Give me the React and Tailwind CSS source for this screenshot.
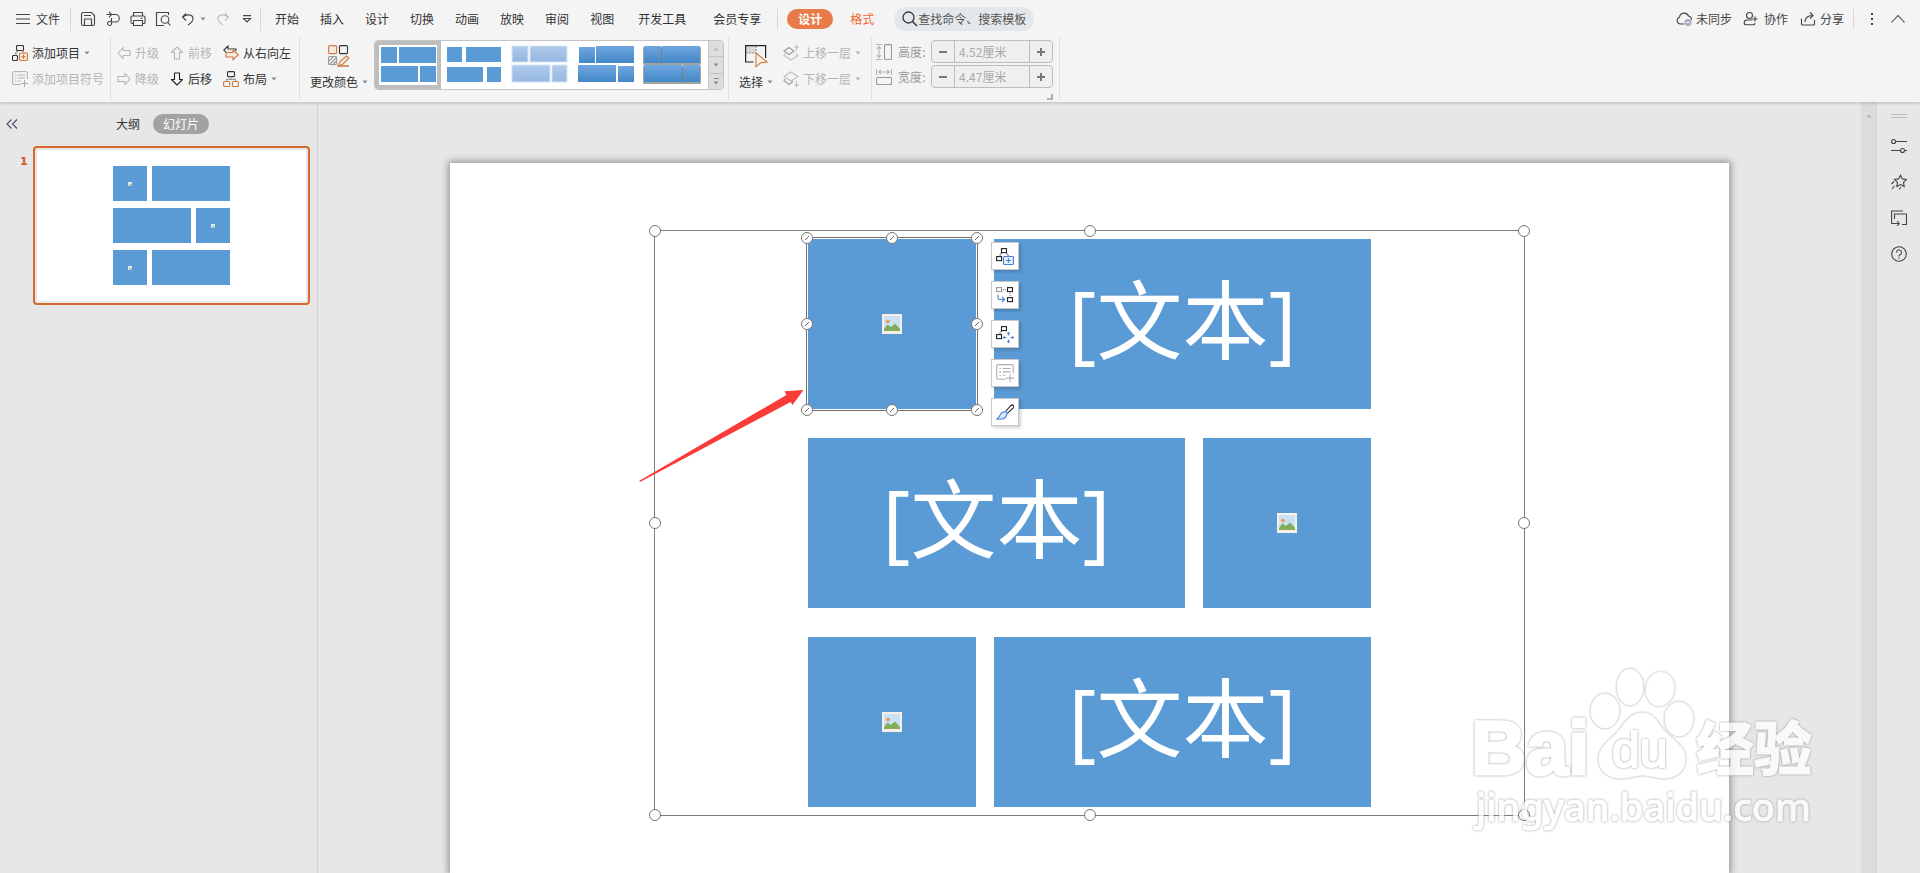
import { useState } from 'react'

const TABS = ['开始', '插入', '设计', '切换', '动画', '放映', '审阅', '视图']
const WIDE_TABS = ['开发工具', '会员专享']

function Icon({ w = 16, h = 16, className = 'text-[#444]', children }) {
  return (
    <svg
      width={w}
      height={h}
      viewBox={`0 0 ${w} ${h}`}
      fill="none"
      stroke="currentColor"
      strokeWidth="1.1"
      className={`shrink-0 ${className}`}
      aria-hidden="true"
    >
      {children}
    </svg>
  )
}

function Caret({ className = 'text-[#888]' }) {
  return (
    <svg width="6" height="4" viewBox="0 0 6 4" className={`shrink-0 ${className}`} aria-hidden="true">
      <path d="M.5.500h5L3 3.400z" fill="currentColor" />
    </svg>
  )
}

function AddItemIcon({ accent = '#cf7a45', fill = '#f8e7dc' }) {
  return (
    <Icon className="text-[#333]">
      <rect x="4.5" y="0.5" width="7" height="5" rx="1" />
      <rect x="0.5" y="10.5" width="5" height="5" rx="1" />
      <path d="M5.5 5.5 3 10" strokeDasharray="1.5 1" />
      <path d="M10.5 5.5 12 8" stroke={accent} />
      <rect x="7.5" y="8" width="8" height="7.5" rx="1.5" fill={fill} stroke={accent} />
      <path d="M11.5 9.5v4.5M9.2 11.8h4.6" stroke={accent} />
    </Icon>
  )
}

function QuickAddIcon() {
  return (
    <Icon w={18} h={17} className="text-[#222]">
      <rect x="5.500" y=".6" width="5" height="4" />
      <rect x=".6" y="8.600" width="5" height="4" />
      <path d="M5.500 5 3.500 8" strokeDasharray="1 1" />
      <path d="M10.500 5 13 8.500" stroke="#4a80dc" />
      <rect x="7.500" y="8.500" width="10" height="8" rx="1" fill="#e3edfb" stroke="#4a80dc" />
      <path d="M12.500 10.200v4.600M10.200 12.500h4.600" stroke="#4a80dc" />
    </Icon>
  )
}

function AddBulletIcon({ w = 16 }) {
  return (
    <svg width={w} height={w} viewBox="0 0 16 16" fill="none" stroke="#b0b0b0" className="shrink-0" aria-hidden="true">
      <path d="M8.500 13.500H2a1.400 1.400 0 0 1-1.400-1.400V2A1.400 1.400 0 0 1 2 .6h12A1.400 1.400 0 0 1 15.400 2v6" />
      <path d="M3 4h1.500M6 4h7M3 7h1.500M6 7h7M3 10h1.500M6 10h2.500M12.500 9v7M9 12.500h7" />
    </svg>
  )
}

function ArrowIcon({ dir, className }) {
  const paths = {
    left: 'M1 7l5-5.500v3h7v5H6v3z',
    right: 'M13 7L8 1.500v3H1v5h7v3z',
    up: 'M7 1L1.500 6.500h3V13h5V6.500h3z',
    down: 'M7 13L1.500 7.500h3V1h5v6.500h3z',
  }
  return (
    <Icon w={14} h={14} className={className}>
      <path d={paths[dir]} strokeLinejoin="round" />
    </Icon>
  )
}

function LayerIcon({ up }) {
  return (
    <Icon className="text-[#c0c0c0]">
      {up ? (
        <>
          <path d="M6 2.500 11 6 6 9.500 1 6z" stroke="#999" />
          <path d="M2.500 9 1 10.500 8 15l7-4.500L12 9" />
          <path d="M13.500 6V1M11.500 3l2-2.200 2 2.200" />
        </>
      ) : (
        <>
          <path d="M8 1l7 4.500L8 10 1 5.500z" />
          <path d="M2 8 1 9.500l5 4 4-3.200" stroke="#999" />
          <path d="M13.500 9.500v6M11.500 13.500l2 2 2-2" />
        </>
      )}
    </Icon>
  )
}

function RibbonButton({ icon, label, muted, caret }) {
  return (
    <button
      type="button"
      disabled={muted}
      className={`flex h-[26px] items-center gap-1 whitespace-nowrap ${muted ? 'text-[#b4b4b4]' : 'text-[#333]'}`}
    >
      {icon}
      <span>{label}</span>
      {caret && <Caret className={muted ? 'text-[#b4b4b4]' : 'text-[#888]'} />}
    </button>
  )
}

function StepField({ id, label, icon, value }) {
  const [size, setSize] = useState(value)
  return (
    <div className="flex items-center">
      {icon}
      <label htmlFor={id} className="ml-1.5 w-[33px] text-[#999]">
        {label}:
      </label>
      <div className="flex h-[23px] w-[122px] overflow-hidden rounded border border-[#bdbdbd] bg-[#efefef]">
        <button type="button" aria-label={`减小${label}`} className="flex w-[23px] items-center justify-center border-r border-[#bdbdbd]">
          <span className="h-[2px] w-2 bg-[#777]" />
        </button>
        <input
          id={id}
          value={size}
          onChange={(e) => setSize(e.target.value)}
          className="w-0 flex-1 bg-transparent px-1 text-[#aaa] outline-none"
        />
        <button type="button" aria-label={`增大${label}`} className="flex w-[23px] items-center justify-center border-l border-[#bdbdbd]">
          <svg width="8" height="8" viewBox="0 0 8 8" aria-hidden="true">
            <path d="M3 0h2v3h3v2H5v3H3V5H0V3h3z" fill="#777" />
          </svg>
        </button>
      </div>
    </div>
  )
}

// x, y, width, height of the four blocks in each style preview
const STYLES = [
  { name: '样式 1', fill: '#5b9bd5', blocks: [[3, 2, 16, 16], [21, 2, 37, 16], [3, 21, 37, 16], [42, 21, 16, 16]] },
  { name: '样式 2', fill: '#5b9bd5', blocks: [[3, 2, 15, 15], [22, 2, 35, 15], [3, 22, 36, 15], [43, 22, 14, 15]] },
  { name: '样式 3', fill: 'url(#lightBlue)', stroke: '#d6e4f5', blocks: [[2, 1, 16, 16], [20, 1, 37, 16], [2, 20, 38, 17], [42, 20, 15, 17]] },
  { name: '样式 4', fill: 'url(#deepBlue)', blocks: [[3, 2, 16, 16], [20, 1, 38, 17], [2, 20, 38, 17], [42, 21, 16, 16]] },
  { name: '样式 5', fill: 'url(#deepBlue)', shadow: true, blocks: [[2, 1, 17, 17], [20, 1, 38, 17], [2, 20, 38, 17], [41, 20, 17, 17]] },
]

function StyleGallery() {
  const [active, setActive] = useState(0)
  return (
    <div className="flex h-[50px] w-[350px] overflow-hidden rounded border border-[#c4c4c4] bg-white">
      <svg width="0" height="0" className="absolute" aria-hidden="true">
        <defs>
          <linearGradient id="lightBlue" x2="0" y2="1">
            <stop offset="0" stopColor="#b0cae9" />
            <stop offset="1" stopColor="#94b6e1" />
          </linearGradient>
          <linearGradient id="deepBlue" x2="0" y2="1">
            <stop offset="0" stopColor="#70a6de" />
            <stop offset="1" stopColor="#4288c8" />
          </linearGradient>
        </defs>
      </svg>
      <div className="flex flex-1">
        {STYLES.map((s, i) => (
          <button
            key={s.name}
            type="button"
            aria-label={s.name}
            onClick={() => setActive(i)}
            className={`flex w-[66px] shrink-0 items-center justify-center ${
              i === active ? 'shadow-[inset_0_0_0_4px_#bebebe]' : ''
            }`}
          >
            <svg width="60" height="40" viewBox="0 0 60 40" aria-hidden="true">
              {s.blocks.map(([x, y, w, h]) => (
                <g key={`${x}-${y}`}>
                  {s.shadow && <rect x={x - 1} y={y + 1} width={w + 2} height={h + 1} rx="1" fill="#666" opacity=".6" />}
                  <rect x={x} y={y} width={w} height={h} fill={s.fill} stroke={s.stroke} />
                </g>
              ))}
            </svg>
          </button>
        ))}
      </div>
      <div className="flex w-[15px] flex-col divide-y divide-[#c4c4c4] border-l border-[#c4c4c4] bg-[#dedede]">
        <button type="button" aria-label="上一行" className="flex flex-1 items-center justify-center">
          <Caret className="rotate-180 text-[#bbb]" />
        </button>
        <button type="button" aria-label="下一行" className="flex flex-1 items-center justify-center">
          <Caret />
        </button>
        <button type="button" aria-label="更多样式" className="flex flex-1 flex-col items-center justify-center gap-[2px]">
          <span className="h-px w-[5px] bg-[#888]" />
          <Caret />
        </button>
      </div>
    </div>
  )
}

function TopBar() {
  return (
    <div className="flex h-[38px] items-center whitespace-nowrap">
      <button type="button" className="flex items-center gap-[6px] pl-4">
        <Icon w={14} h={10}>
          <path d="M0 .5h14M0 5h14M0 9.500h14" />
        </Icon>
        文件
      </button>
      <div className="ml-[10px] h-6 w-px bg-[#d8d8d8]" />

      <div className="flex items-center gap-[9px] pl-[9px]">
        <button type="button" aria-label="保存">
          <Icon>
            <path d="M1.500 13V3a1.500 1.500 0 0 1 1.500-1.500h8.500l3 3V13a1.500 1.500 0 0 1-1.500 1.500H3A1.500 1.500 0 0 1 1.500 13z" />
            <path d="M4.500 14V8h7v6M4 4.500h7" />
          </Icon>
        </button>
        <button type="button" aria-label="输出">
          <Icon>
            <path d="M1.500 3.500h9a3.500 3.500 0 0 1 0 7.500h-4M4 .8l2.600 2.700L4 6.300" />
            <path d="M6.500 7v5.500a2 2 0 1 1-3-1.800c.8-.5 2-.7 3-.7" />
          </Icon>
        </button>
        <button type="button" aria-label="打印">
          <Icon>
            <path d="M3.500 5V1.500h9V5M3.500 12.500H2A1 1 0 0 1 1 11.500V6.200A1.200 1.200 0 0 1 2.200 5h11.600A1.200 1.200 0 0 1 15 6.200v5.300a1 1 0 0 1-1 1h-1.500" />
            <path d="M3.500 9.500h9v5h-9zM10.500 7.200h2" />
          </Icon>
        </button>
        <button type="button" aria-label="打印预览">
          <Icon>
            <path d="M13.500 4V1.500h-12v13H9" />
            <circle cx="10" cy="8.500" r="3.800" />
            <path d="m12.700 11.300 2.800 3.200" />
          </Icon>
        </button>
        <button type="button" aria-label="撤销" className="flex items-center gap-1">
          <Icon>
            <path d="M6 2.500 2.500 6 6 9.500M2.800 6c3.500-3 10-3.200 10.200 1.500.1 2.500-2 4.700-5 6.500" />
          </Icon>
          <Caret />
        </button>
        <button type="button" aria-label="恢复" disabled>
          <Icon className="text-[#bbb]">
            <path d="m10 2.500 3.500 3.500L10 9.500M13.200 6C9.700 3 3.200 2.800 3 7.500c-.1 2.500 2 4.700 5 6.500" />
          </Icon>
        </button>
        <button type="button" aria-label="自定义快速访问工具栏" className="pl-[2px]">
          <Icon w={10} h={8}>
            <path d="M1 .6h8M1.500 3.500h7L5 7z" />
          </Icon>
        </button>
      </div>
      <div className="ml-2 h-6 w-px bg-[#d8d8d8]" />

      <nav className="flex items-center gap-[21px] pl-[14px] text-[#333]">
        {TABS.map((tab) => (
          <button key={tab} type="button">
            {tab}
          </button>
        ))}
        {WIDE_TABS.map((tab) => (
          <button key={tab} type="button" className="px-[3px]">
            {tab}
          </button>
        ))}
      </nav>
      <div className="ml-[13px] h-5 w-px bg-[#d8d8d8]" />
      <button type="button" className="ml-[9px] h-5 rounded-full bg-[#e87b49] px-[11px] font-bold text-white">
        设计
      </button>
      <button type="button" className="ml-[17px] text-[#f0682f]">
        格式
      </button>
      <label className="ml-5 flex h-6 w-[140px] items-center rounded-full bg-[#e5e8eb] pl-2">
        <Icon className="text-[#333]">
          <circle cx="6.500" cy="6.500" r="5.500" strokeWidth="1.300" />
          <path d="m10.500 10.500 4.500 4.500" strokeWidth="1.500" />
        </Icon>
        <input
          aria-label="查找命令"
          placeholder="查找命令、搜索模板"
          className="w-0 flex-1 bg-transparent outline-none placeholder:text-[#555]"
        />
      </label>

      <div className="ml-auto flex items-center">
        <button type="button" className="flex items-center gap-1">
          <Icon>
            <path d="M8 13H4.500A3.500 3.500 0 0 1 3.500 6.200 4.700 4.700 0 0 1 12.500 5 3.800 3.800 0 0 1 15.500 9" />
            <circle cx="12" cy="11.500" r="3.500" fill="#a3adbd" stroke="none" />
            <path d="M10.200 11.500h3.600" stroke="#fff" />
          </Icon>
          未同步
        </button>
        <button type="button" className="ml-[11px] flex items-center gap-[5px]">
          <Icon>
            <circle cx="6.500" cy="4.500" r="3" />
            <path d="M9.500 9H4a2.800 2.800 0 0 0-2.800 2.800c0 1.400.8 2 2 2h6.600c1.200 0 2.200-.4 2.200-1.800M12 5.500v5M9.500 8h5" />
          </Icon>
          协作
        </button>
        <button type="button" className="ml-3 flex items-center gap-1">
          <Icon>
            <path d="M1.500 7.500V13a1 1 0 0 0 1 1h11a1 1 0 0 0 1-1V9" />
            <path d="M5 11c0-4 2.500-6.500 7.500-6.500M10 1.500l3 3-3 3" />
          </Icon>
          分享
        </button>
        <div className="ml-[9px] h-5 w-px bg-[#d8d8d8]" />
        <button type="button" aria-label="更多" className="ml-4">
          <Icon w={4} h={12}>
            <path d="M1 0h2v2H1zM1 5h2v2H1zM1 10h2v2H1z" fill="currentColor" stroke="none" />
          </Icon>
        </button>
        <button type="button" aria-label="折叠功能区" className="ml-4 mr-[14px]">
          <Icon w={16} h={10}>
            <path d="m1.500 8.500 6.500-7 6.500 7" />
          </Icon>
        </button>
      </div>
    </div>
  )
}

function Ribbon() {
  return (
    <div className="flex h-[62px] whitespace-nowrap">
      <div className="border-r border-[#dedede] pl-3 pr-1.5 pt-[2px]">
        <RibbonButton icon={<AddItemIcon />} label="添加项目" caret />
        <RibbonButton icon={<AddBulletIcon />} label="添加项目符号" muted />
      </div>

      <div className="flex gap-[11px] border-r border-[#dedede] pl-[6px] pr-2 pt-[2px]">
        <div>
          <RibbonButton icon={<ArrowIcon dir="left" className="text-[#b4b4b4]" />} label="升级" muted />
          <RibbonButton icon={<ArrowIcon dir="right" className="text-[#b4b4b4]" />} label="降级" muted />
        </div>
        <div>
          <RibbonButton icon={<ArrowIcon dir="up" className="text-[#b4b4b4]" />} label="前移" muted />
          <RibbonButton icon={<ArrowIcon dir="down" className="text-[#222]" />} label="后移" />
        </div>
        <div>
          <RibbonButton
            icon={
              <Icon className="text-[#333]">
                <path d="M13 6V4H5V1L.8 5 4 8.300" />
                <path d="M3 7.500h7V4.800l5.300 5-5.300 5V12H3z" fill="#f8e7dc" stroke="#cf7a45" />
              </Icon>
            }
            label="从右向左"
          />
          <RibbonButton
            icon={
              <Icon className="text-[#333]">
                <rect x="4.500" y=".6" width="7" height="5" rx="1" />
                <path d="M8 5.600v2.800M3.500 10.500V8.400h9v2.100" stroke="#999" />
                <rect x=".6" y="10.500" width="6" height="5" rx="1" stroke="#cf7a45" />
                <rect x="9.400" y="10.500" width="6" height="5" rx="1" stroke="#cf7a45" />
              </Icon>
            }
            label="布局"
            caret
          />
        </div>
      </div>

      <div className="flex gap-[6px] border-r border-[#dedede] pl-[10px] pr-1 pt-[2px]">
        <button type="button" className="flex h-[50px] flex-col items-center justify-between pt-[5px] text-[#333]">
          <Icon w={22} h={22} className="text-[#333]">
            <rect x=".6" y=".6" width="8" height="8" rx="1" fill="#f8e7dc" stroke="#cf7a45" />
            <rect x="11.500" y=".6" width="8" height="8" rx="1" />
            <rect x=".6" y="11.500" width="8" height="8" rx="1" stroke="#999" />
            <path d="M1 16l4.500-4.500M2 19l6.500-6.500M5 19.500l3.500-3.500" stroke="#999" />
            <path d="M10 21l2-4.500 6.500-5.500 2.500 2-6 6zh11" fill="#f8e7dc" stroke="#cf7a45" />
            <path d="M10 21h11" stroke="#cf7a45" />
          </Icon>
          <span className="flex items-center gap-1 leading-4">
            更改颜色
            <Caret />
          </span>
        </button>
        <StyleGallery />
      </div>

      <div className="flex gap-[10px] border-r border-[#dedede] pl-[10px] pr-[10px] pt-[2px]">
        <button type="button" className="flex h-[50px] flex-col items-center justify-between pt-1 text-[#333]">
          <Icon w={24} h={24} className="text-[#222]">
            <path d="M1 1h10v8H1z" fill="#d9d9d9" stroke="none" />
            <path d="M9.500 18H1.600V1.600h20V14" strokeWidth="1.200" />
            <path d="M12 2v7H2" stroke="#888" strokeDasharray="2 1" />
            <path d="m12 9 11 9-6.500.8-4.500 4z" fill="#fbeee6" stroke="#cf7a45" />
          </Icon>
          <span className="flex items-center gap-1 leading-4">
            选择
            <Caret />
          </span>
        </button>
        <div>
          <RibbonButton icon={<LayerIcon up />} label="上移一层" muted caret />
          <RibbonButton icon={<LayerIcon />} label="下移一层" muted caret />
        </div>
      </div>

      <div className="flex flex-col gap-[2px] border-r border-[#dedede] pl-1 pr-[6px] pt-[2px]">
        <StepField
          id="shape-height"
          label="高度"
          value="4.52厘米"
          icon={
            <Icon className="text-[#b4b4b4]">
              <path d="M0 .5h6M0 15.500h6M3 3v10M1 5l2-2.500L5 5M1 11l2 2.500L5 11" />
              <rect x="8.500" y=".6" width="7" height="15" rx="1" stroke="#999" />
            </Icon>
          }
        />
        <StepField
          id="shape-width"
          label="宽度"
          value="4.47厘米"
          icon={
            <Icon className="text-[#b4b4b4]">
              <path d="M.5 0v6M15.500 0v6M3 3h10M5 1 2.500 3 5 5M11 1l2.500 2L11 5" />
              <rect x=".6" y="8.500" width="15" height="7" rx="1" stroke="#999" />
            </Icon>
          }
        />
        <button type="button" aria-label="大小设置" className="mt-1 self-end">
          <Icon w={6} h={6} className="text-[#777]">
            <path d="M5 0v5H0" />
          </Icon>
        </button>
      </div>
    </div>
  )
}

function PicturePlaceholder() {
  return (
    <svg width="20" height="20" viewBox="0 0 20 20" aria-hidden="true">
      <path d="M0 0h20v20H0z" fill="#fbeee6" />
      <path d="M2 2h16v15H2z" fill="#c9e1f5" />
      <circle cx="6" cy="7.500" r="1.800" fill="#f0964a" />
      <path d="M2 17v-2l3.500-4.500 3.500 2.500 4-3.500 5 5.500v2z" fill="#84ad5a" />
    </svg>
  )
}

function ThumbPicture() {
  return (
    <svg width="4" height="4" viewBox="0 0 4 4" aria-hidden="true">
      <path d="M0 0h4v4H0z" fill="#dce9f2" />
      <path d="M1 2.500h3v1H1z" fill="#84ad5a" />
    </svg>
  )
}

function ThumbRow({ reverse }) {
  return (
    <div className={`flex h-[35px] gap-[5px] ${reverse ? 'flex-row-reverse' : ''}`}>
      <div className="flex w-[34px] items-center justify-center bg-[#5b9bd5]">
        <ThumbPicture />
      </div>
      <div className="flex-1 bg-[#5b9bd5]" />
    </div>
  )
}

function SlidePanel() {
  return (
    <aside className="w-[318px] shrink-0 border-r border-[#d2d2d2]">
      <div className="flex h-11 items-center pl-[6px]">
        <button type="button" aria-label="收起面板">
          <Icon w={12} h={10} className="text-[#4a4a66]">
            <path d="M5.500.5 1 5l4.500 4.500M11 .5 6.500 5 11 9.500" />
          </Icon>
        </button>
        <button type="button" className="ml-[98px] text-[#333]">
          大纲
        </button>
        <button type="button" className="ml-[13px] h-5 rounded-full bg-[#a2a2a2] px-[10px] text-white">
          幻灯片
        </button>
      </div>
      <div className="flex pl-5 pr-[7px]">
        <span className="w-[13px] pt-[10px] font-['DejaVu_Sans'] text-[11px] font-bold leading-3 text-[#d0581a]">1</span>
        <button
          type="button"
          aria-label="幻灯片 1"
          className="flex-1 rounded border-2 border-[#d66a2c] bg-[#e7e7e7] p-[2px]"
        >
          <div className="flex flex-col gap-[7px] bg-white px-[76px] py-4">
            <ThumbRow />
            <ThumbRow reverse />
            <ThumbRow />
          </div>
        </button>
      </div>
    </aside>
  )
}

const HANDLES = [
  'left-0 top-0',
  'left-1/2 top-0',
  'left-full top-0',
  'left-0 top-1/2',
  'left-full top-1/2',
  'left-0 top-full',
  'left-1/2 top-full',
  'left-full top-full',
]

function Handles({ slashed }) {
  return HANDLES.map((pos) => (
    <span
      key={pos}
      className={`absolute flex size-3 -translate-1/2 items-center justify-center rounded-full border border-[#777] bg-white ${pos}`}
    >
      {slashed && (
        <svg width="6" height="6" viewBox="0 0 6 6" aria-hidden="true">
          <path d="M1 5l4-4" stroke="#666" />
        </svg>
      )}
    </span>
  ))
}

const QUICK_ACTIONS = [
  { label: '添加项目', icon: <QuickAddIcon /> },
  {
    label: '更改位置',
    icon: (
      <Icon w={18} className="text-[#222]">
        <rect x=".6" y=".6" width="5" height="4" stroke="#999" />
        <rect x="11.500" y=".6" width="5" height="4" />
        <rect x="11.500" y="10.600" width="5" height="4" />
        <path d="M7 2.600h4M14 6v4" stroke="#888" strokeDasharray="1 1" />
        <path d="M2 7.500V11a1.500 1.500 0 0 0 1.500 1.500H8.500M6 10l2.600 2.500L6 15" stroke="#4a80dc" />
      </Icon>
    ),
  },
  {
    label: '添加项目布局',
    icon: (
      <Icon w={18} h={17} className="text-[#222]">
        <rect x="5.500" y=".6" width="5" height="4" />
        <rect x=".6" y="8.600" width="5" height="4" />
        <path d="M5.500 5 3.500 8" strokeDasharray="1 1" />
        <path
          d="M12.500 6.500v3M12.500 13.500v3M7.500 11.500h3M14.500 11.500h3M11.300 7.700l1.200-1.200 1.200 1.200M11.300 15.300l1.200 1.200 1.200-1.200M8.700 10.300l-1.200 1.200 1.200 1.200M16.300 10.300l1.200 1.200-1.200 1.200"
          stroke="#4a80dc"
        />
      </Icon>
    ),
  },
  { label: '添加项目符号', icon: <AddBulletIcon w={18} /> },
  {
    label: '形状样式',
    icon: (
      <Icon w={18} className="text-[#222]">
        <path d="m9.500 7.500 5.500-6a1.600 1.600 0 0 1 2.300 2.300l-6 5.500" />
        <path d="M9.500 7.500 6 8.500C3.500 10 4 13.500.8 15c4.500.6 8.500 0 9.700-3.500l1-2.500z" fill="#d8e6fa" stroke="#4a80dc" />
      </Icon>
    ),
  },
]

function Selection() {
  return (
    <>
      <div className="absolute -inset-[2px] border border-[#6e6e6e]">
        <Handles slashed />
      </div>
      <div className="absolute left-full top-[3px] z-10 ml-[15px] flex flex-col gap-[11px]">
        {QUICK_ACTIONS.map((action) => (
          <button
            key={action.label}
            type="button"
            aria-label={action.label}
            className="flex size-7 items-center justify-center border border-[#c8c8c8] bg-white shadow-[2px_2px_3px_rgba(0,0,0,0.18)]"
          >
            {action.icon}
          </button>
        ))}
      </div>
      <svg
        width="165"
        height="92"
        viewBox="0 0 165 92"
        className="absolute right-full top-[151px] mr-1"
        aria-hidden="true"
      >
        <path d="M164.500 0 145.500 1.200 147.500 5 0 91 1.500 91.800 151.500 12 153.500 15z" fill="#fb3b38" />
      </svg>
    </>
  )
}

function ArtRow({ reverse, selected }) {
  return (
    <div className={`flex h-[170px] gap-[18px] ${reverse ? 'flex-row-reverse' : ''}`}>
      <div className="relative flex w-[168px] shrink-0 items-center justify-center bg-[#5b9bd5]">
        <PicturePlaceholder />
        {selected && <Selection />}
      </div>
      <div className="flex flex-1 items-center justify-center whitespace-nowrap bg-[#5b9bd5] pb-2 font-['Open_Sans','Noto_Sans_CJK_SC',sans-serif] text-[86px] leading-[86px] text-white">
        [文本]
      </div>
    </div>
  )
}

function Slide() {
  return (
    <main className="flex min-w-0 flex-1 flex-col px-[132px] pt-[61px]">
      <div className="flex-1 bg-white px-[204px] pb-[57px] pt-[67px] shadow-[0_0_7px_2px_rgba(0,0,0,0.35)]">
        <div className="relative border border-[#7c7c7c] px-[153px] py-2">
          <div className="flex flex-col gap-[29px]">
            <ArtRow selected />
            <ArtRow reverse />
            <ArtRow />
          </div>
          <Handles />
        </div>
      </div>
    </main>
  )
}

function SideRail() {
  return (
    <aside className="flex w-11 shrink-0 flex-col items-center gap-5 border-l border-[#d6d6d6] pt-3">
      <Icon w={16} h={4} className="text-[#bbb]">
        <path d="M0 .5h16M0 3.500h16" />
      </Icon>
      <button type="button" aria-label="属性">
        <Icon>
          <circle cx="2.600" cy="3.500" r="2" />
          <path d="M4.600 3.500H16M0 12.500h9.500M13.500 12.500H16" />
          <circle cx="11.500" cy="12.500" r="2" />
        </Icon>
      </button>
      <button type="button" aria-label="动画">
        <Icon>
          <path d="m9.500 1.200 1.900 3.700 4.100.6-3 2.900.7 4.100-3.700-1.900-3.700 1.900.7-4.100-3-2.900 4.100-.6z" />
          <path d="M3 7.500.5 10M3.500 12l-2.500 3M10 13l-2 2.500" />
        </Icon>
      </button>
      <button type="button" aria-label="切换窗口">
        <Icon>
          <path d="M12 1H.6v12.500H8M6 11l2.300 2.500L6 16" />
          <path d="M3.500 9V4h12v10.500H11" />
        </Icon>
      </button>
      <button type="button" aria-label="帮助">
        <Icon>
          <circle cx="8" cy="8" r="7.300" />
          <path d="M5.500 6.500a2.500 2.500 0 1 1 3.500 2.300c-.7.300-1 .7-1 1.700M8 11.500v1.300" />
        </Icon>
      </button>
    </aside>
  )
}

function Watermark() {
  return (
    <svg
      width="360"
      height="180"
      viewBox="0 0 360 180"
      className="pointer-events-none absolute bottom-[33px] right-[92px] opacity-75 [&>*]:drop-shadow-[0_0_1px_#777]"
      fill="#fff"
      stroke="#fff"
      aria-hidden="true"
    >
      <text x="3" y="114" fontFamily="Liberation Sans" fontWeight="700" fontSize="76" strokeWidth="3">
        Bai
      </text>
      <ellipse cx="137" cy="51" rx="14" ry="17" />
      <ellipse cx="162" cy="27" rx="13" ry="18" />
      <ellipse cx="192" cy="29" rx="14" ry="17" transform="rotate(10 192 29)" />
      <ellipse cx="211" cy="59" rx="14" ry="17" />
      <path d="M174 53c10 0 14 7 20 15 8 11 24 17 23 32-1 14-12 19-24 18-7-1-12-3-19-3s-12 3-20 3c-12 1-23-6-23-19 0-14 14-20 22-31 6-8 11-15 21-15z" />
      <text x="144" y="107" fontFamily="Liberation Sans" fontSize="50" strokeWidth="2">
        du
      </text>
      <text x="228" y="110" fontFamily="Noto Sans CJK SC" fontWeight="900" fontSize="58">
        经验
      </text>
      <text x="8" y="161" fontFamily="Noto Sans" fontWeight="500" fontSize="38" strokeWidth="1">
        jingyan.baidu.com
      </text>
    </svg>
  )
}

export default function App() {
  return (
    <div className="relative flex min-h-screen flex-col overflow-hidden bg-[#e7e7e7] font-['Noto_Sans_CJK_SC',sans-serif] text-xs text-[#444]">
      <header className="z-10 h-[102px] bg-[#f4f4f4] shadow-[0_1px_3px_rgba(0,0,0,0.2)]">
        <TopBar />
        <Ribbon />
      </header>
      <div className="flex flex-1">
        <SlidePanel />
        <Slide />
        <div className="flex w-[15px] shrink-0 justify-center bg-[#dcdcdc] pt-3">
          <Caret className="rotate-180 text-[#b0b0b0]" />
        </div>
        <SideRail />
      </div>
      <Watermark />
    </div>
  )
}
